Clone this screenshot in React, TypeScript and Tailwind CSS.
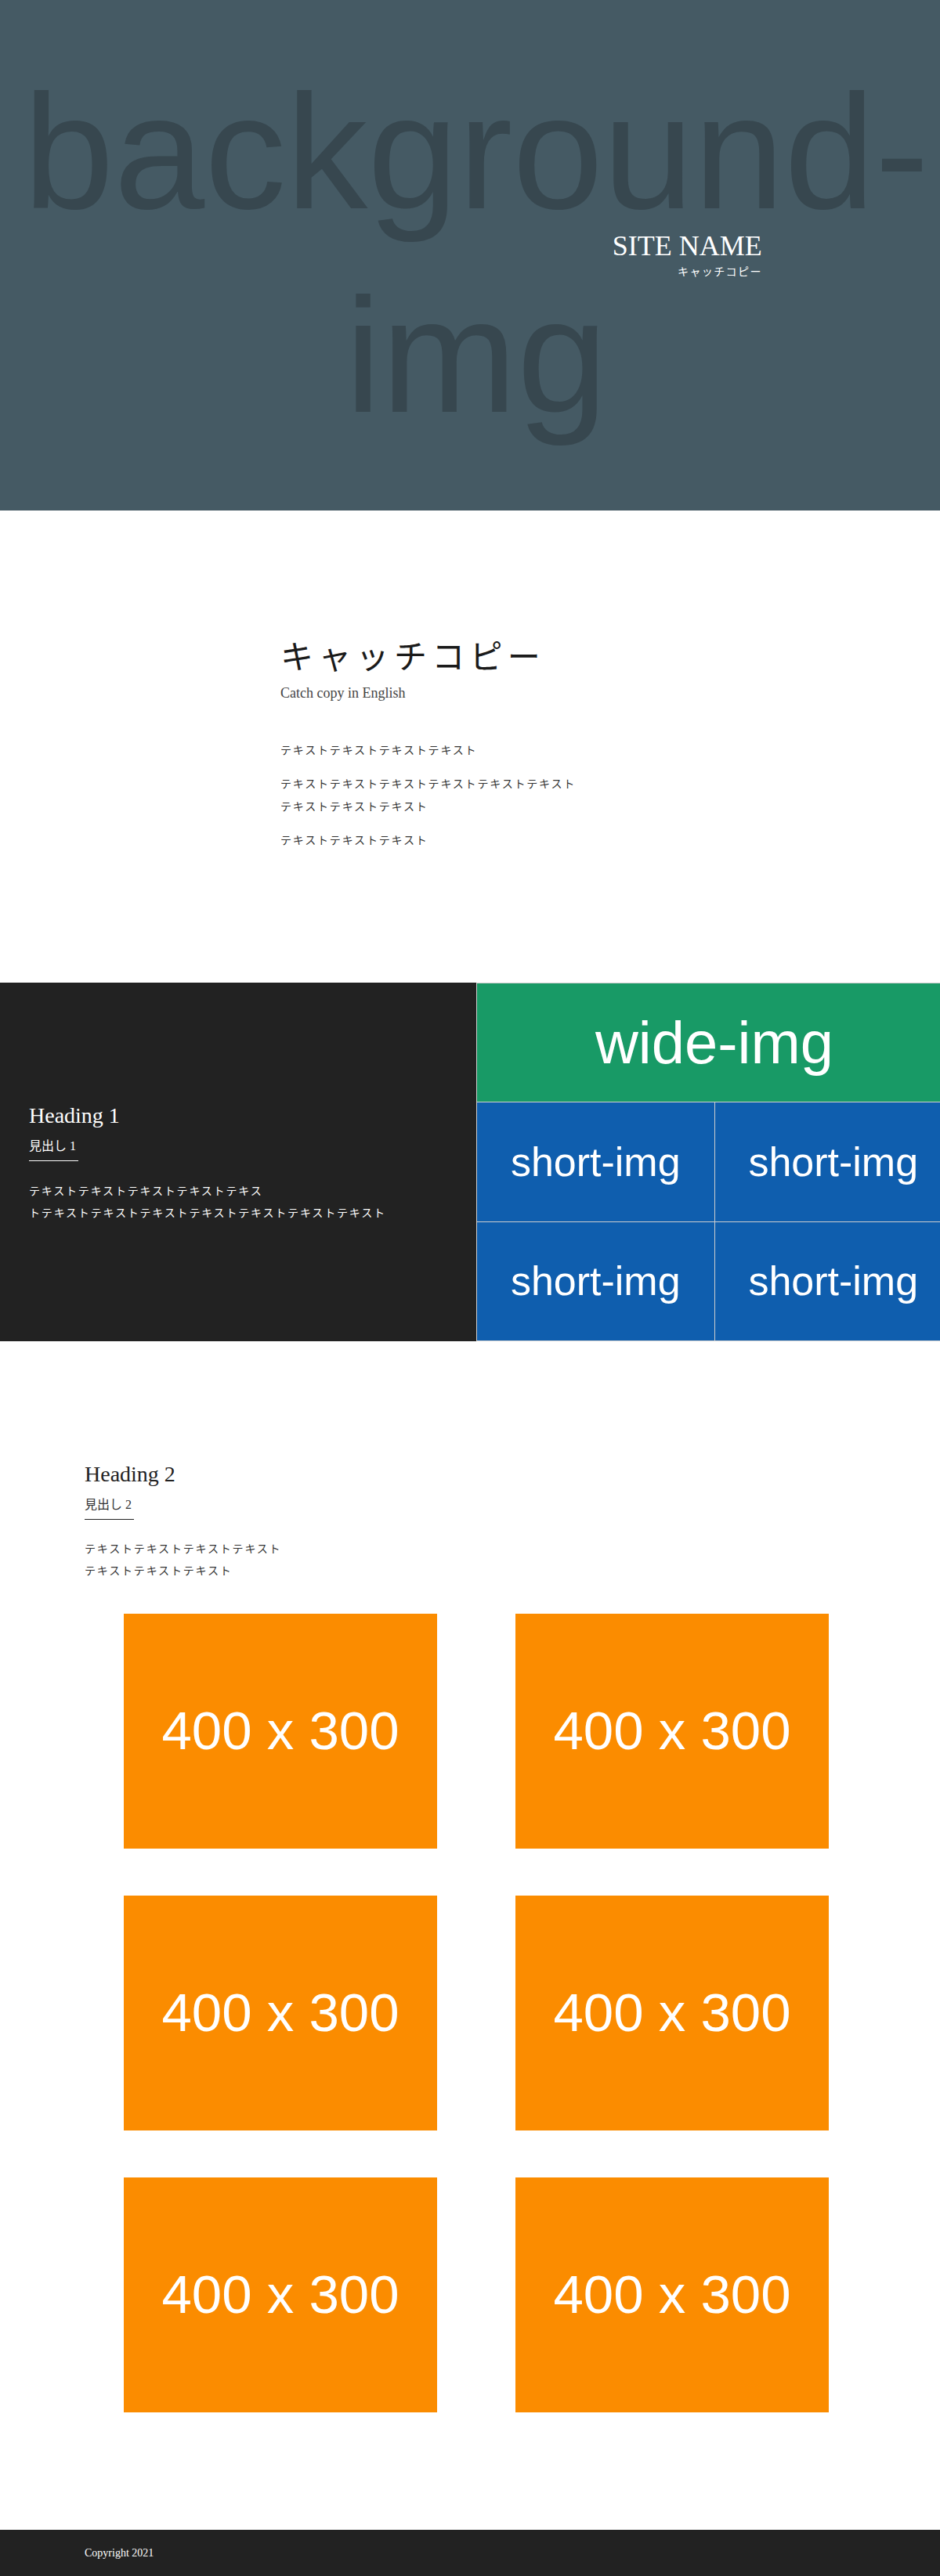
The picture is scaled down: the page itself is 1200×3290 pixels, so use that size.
const TILE = 'flex items-center justify-center text-white font-["Liberation_Sans",Arial,sans-serif]';

function Hero() {
  return (
    <section className="relative h-[652px] overflow-hidden bg-[#455a64]">
      {/* placeholder background image */}
      <div
        aria-hidden="true"
        className="absolute inset-0 flex items-center justify-center pb-[4px] text-center font-['Liberation_Sans',Arial,sans-serif] text-[208px] leading-[260px] text-[#37474f]"
      >
        background-img
      </div>
      <div className="relative flex h-full items-center justify-end pr-[20%]">
        <div className="text-right text-white">
          <h1 className="text-[36px] leading-[43px]">SITE NAME</h1>
          <p className="text-[14px] leading-[24px] tracking-[0.1em]">キャッチコピー</p>
        </div>
      </div>
    </section>
  );
}

function Intro() {
  return (
    <section className="pt-[159px] pb-[167px]">
      <div className="mx-auto w-[500px]">
        <h2 className="text-[42px] leading-[59px] tracking-[0.15em] text-[#1a1a1a]">キャッチコピー</h2>
        <p className="mt-[2px] text-[18px] leading-[27px] text-[#444]">Catch copy in English</p>
        <div className="mt-[45px] space-y-[14px] text-[14px] leading-[29px] tracking-[0.13em] text-[#333]">
          <p>テキストテキストテキストテキスト</p>
          <p>
            テキストテキストテキストテキストテキストテキスト
            <br />
            テキストテキストテキスト
          </p>
          <p>テキストテキストテキスト</p>
        </div>
      </div>
    </section>
  );
}

function Feature() {
  return (
    <section className="flex h-[458px]">
      <div className="flex w-1/2 flex-col justify-center bg-[#222] pl-[37px] text-white">
        <h2 className="text-[28px] leading-[42px]">Heading 1</h2>
        <p className="mt-[6px] w-fit border-b border-white pr-[3px] pb-[6px] text-[16px] leading-[24px]">見出し 1</p>
        <p className="mt-[25px] text-[14px] leading-[28px] tracking-[0.13em]">
          テキストテキストテキストテキストテキス
          <br />
          トテキストテキストテキストテキストテキストテキストテキスト
        </p>
      </div>
      <div className="grid w-1/2 grid-cols-2 grid-rows-3 gap-px bg-[#cfcfcf] p-px">
        <div className={`${TILE} col-span-2 bg-[#189a66] text-[76px]`}>wide-img</div>
        <div className={`${TILE} bg-[#0f5eae] text-[52px]`}>short-img</div>
        <div className={`${TILE} bg-[#0f5eae] text-[52px]`}>short-img</div>
        <div className={`${TILE} bg-[#0f5eae] text-[52px]`}>short-img</div>
        <div className={`${TILE} bg-[#0f5eae] text-[52px]`}>short-img</div>
      </div>
    </section>
  );
}

function Gallery() {
  return (
    <section className="pt-[149px] pb-[150px]">
      <div className="mx-auto w-[1000px] text-[#222]">
        <h2 className="text-[28px] leading-[42px]">Heading 2</h2>
        <p className="mt-[6px] w-fit border-b border-[#222] pr-[3px] pb-[6px] text-[16px] leading-[24px] text-[#333]">見出し 2</p>
        <p className="mt-[24px] text-[14px] leading-[28px] tracking-[0.13em] text-[#333]">
          テキストテキストテキストテキスト
          <br />
          テキストテキストテキスト
        </p>
        <div className="mt-[40px] grid grid-cols-2 gap-y-[60px]">
          {Array.from({ length: 6 }).map((_, i) => (
            <div key={i} className="flex justify-center">
              <div className={`${TILE} h-[300px] w-[400px] bg-[#fb8c00] text-[69px]`}>400 x 300</div>
            </div>
          ))}
        </div>
      </div>
    </section>
  );
}

function Footer() {
  return (
    <footer className="flex h-[59px] items-center bg-[#222]">
      <div className="mx-auto w-[1000px] text-[14px] text-white">Copyright 2021</div>
    </footer>
  );
}

export default function App() {
  return (
    <div className="w-full overflow-hidden bg-white">
      <div className="w-[1216px] font-['Liberation_Serif','Noto_Sans_CJK_JP',serif]">
        <Hero />
        <Intro />
        <Feature />
        <Gallery />
        <Footer />
      </div>
    </div>
  );
}
